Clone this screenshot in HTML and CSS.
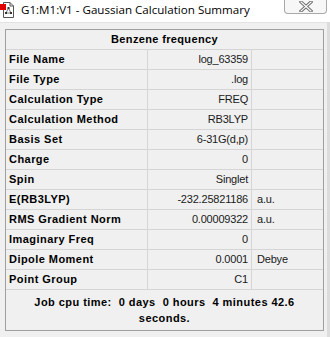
FILE: index.html
```html
<!DOCTYPE html>
<html lang="en">
<head>
    <meta charset="UTF-8">
    <title>G1:M1:V1 - Gaussian Calculation Summary</title>
    <link rel="stylesheet" href="styles.css">
</head>
<body>
    <div class="window">
        <div class="titlebar">
            <svg class="app-icon" width="14" height="17" viewBox="0 0 14 17">
                <path d="M3.5 1.5 H10 L13.5 5 V16.5 H3.5 Z" fill="#fff" stroke="#555"/>
                <path d="M10 1.5 V5 H13.5" fill="none" stroke="#555"/>
                <rect x="0" y="3" width="6" height="6" fill="#e00000"/>
                <path d="M8.5 7 L6 12 M8.5 7 L11 12 M6 12 H11" stroke="#777" stroke-width="1" fill="none"/>
                <rect x="7.5" y="6" width="2" height="2" fill="#333"/>
                <rect x="5" y="11" width="2" height="2" fill="#333"/>
                <rect x="10" y="11" width="2" height="2" fill="#333"/>
            </svg>
            <span class="title">G1:M1:V1 - Gaussian Calculation Summary</span>
            <div class="close-btn">
                <svg width="14" height="11" viewBox="0 0 14 11">
                    <path d="M2 1 L12 10 M12 1 L2 10" stroke="#6d6d6d" stroke-width="3.2" stroke-linecap="square"/>
                    <path d="M2 1 L12 10 M12 1 L2 10" stroke="#fdfdfd" stroke-width="1.2" stroke-linecap="square"/>
                </svg>
            </div>
        </div>

        <div class="client">
            <div class="summary">
                <div class="summary-head">Benzene frequency</div>
                <div class="summary-grid">
                    <div class="cell label">File Name</div>
                    <div class="cell value">log_63359</div>
                    <div class="cell unit"></div>

                    <div class="cell label">File Type</div>
                    <div class="cell value">.log</div>
                    <div class="cell unit"></div>

                    <div class="cell label">Calculation Type</div>
                    <div class="cell value">FREQ</div>
                    <div class="cell unit"></div>

                    <div class="cell label">Calculation Method</div>
                    <div class="cell value">RB3LYP</div>
                    <div class="cell unit"></div>

                    <div class="cell label">Basis Set</div>
                    <div class="cell value">6-31G(d,p)</div>
                    <div class="cell unit"></div>

                    <div class="cell label">Charge</div>
                    <div class="cell value">0</div>
                    <div class="cell unit"></div>

                    <div class="cell label">Spin</div>
                    <div class="cell value">Singlet</div>
                    <div class="cell unit"></div>

                    <div class="cell label">E(RB3LYP)</div>
                    <div class="cell value">-232.25821186</div>
                    <div class="cell unit">a.u.</div>

                    <div class="cell label">RMS Gradient Norm</div>
                    <div class="cell value">0.00009322</div>
                    <div class="cell unit">a.u.</div>

                    <div class="cell label">Imaginary Freq</div>
                    <div class="cell value">0</div>
                    <div class="cell unit"></div>

                    <div class="cell label">Dipole Moment</div>
                    <div class="cell value">0.0001</div>
                    <div class="cell unit">Debye</div>

                    <div class="cell label">Point Group</div>
                    <div class="cell value">C1</div>
                    <div class="cell unit"></div>
                </div>
                <div class="summary-foot">Job cpu time:  0 days  0 hours  4 minutes 42.6<br>seconds.</div>
            </div>
        </div>
    </div>
</body>
</html>
```

FILE: styles.css
```css
html, body {
    margin: 0;
    padding: 0;
}
body {
    width: 330px;
    height: 337px;
    overflow: hidden;
    background-color: #fff;
    font-family: "Liberation Sans", Arial, sans-serif;
    color: #000;
}
.window {
    display: flex;
    flex-direction: column;
    height: 337px;
}
.titlebar {
    height: 22px;
    display: flex;
    align-items: flex-start;
    background-color: #fff;
}
.app-icon {
    margin-top: 1px;
    flex: none;
}
.title {
    margin-left: 7px;
    margin-top: 2px;
    font-family: "Open Sans", "Noto Sans", sans-serif;
    font-size: 11.6px;
    line-height: 16px;
    color: #000;
    white-space: nowrap;
}
.close-btn {
    margin-left: auto;
    margin-right: 3px;
    width: 43px;
    height: 14px;
    border: 1px solid #a9a9a9;
    border-top: none;
    border-radius: 0 0 4px 4px;
    background-color: #f7f7f7;
    display: flex;
    justify-content: center;
    align-items: flex-start;
    padding-top: 1px;
    box-sizing: border-box;
}
.client {
    flex: 1;
    background-color: #f0f0f0;
    border-top: 1px solid #e3e3e3;
    border-right: 3px solid #dcdcdc;
    padding: 6px 0 0 5px;
}
.summary {
    width: 317px;
    border: 1px solid #a0a0a0;
    background-color: #f0f0f0;
}
.summary-head {
    height: 19px;
    line-height: 19px;
    border-bottom: 1px solid #d5d5d5;
    text-align: center;
    font-weight: bold;
    font-size: 11px;
    letter-spacing: 0.35px;
}
.summary-grid {
    display: grid;
    grid-template-columns: 142px 104px 1fr;
}
.cell {
    height: 19px;
    line-height: 19px;
    border-bottom: 1px solid #d5d5d5;
    font-size: 11px;
    white-space: nowrap;
    overflow: hidden;
}
.label {
    padding-left: 3px;
    font-weight: bold;
    letter-spacing: 0.45px;
    border-right: 1px solid #d5d5d5;
}
.value {
    text-align: right;
    padding-right: 3px;
    letter-spacing: -0.2px;
    color: #1a1a1a;
    border-right: 1px solid #d5d5d5;
}
.unit {
    padding-left: 5px;
    letter-spacing: -0.2px;
    color: #1a1a1a;
}
.summary-foot {
    height: 40px;
    padding-top: 4px;
    box-sizing: border-box;
    text-align: center;
    font-weight: bold;
    font-size: 11px;
    line-height: 16px;
    letter-spacing: 0.45px;
    white-space: pre;
}
```
